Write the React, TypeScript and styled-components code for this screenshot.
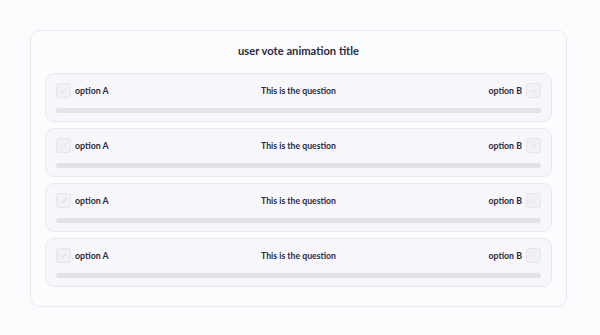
import React from "react";
import styled, { createGlobalStyle } from "styled-components";

const Global = createGlobalStyle`
  html, body { margin: 0; padding: 0; background: #fbfafd; }
  body { font-family: "Lato", "Noto Sans", sans-serif; color: #25263a; }
`;

const Page = styled.div`
  width: 600px;
  height: 335px;
  box-sizing: border-box;
  padding: 30px 33px 28px 30px;
`;

const Card = styled.div`
  box-sizing: border-box;
  height: 277px;
  border: 1px solid #e9e8ef;
  border-radius: 10px;
  background: #fcfbfe;
  padding: 10px 14px 19px 14px;
  display: flex;
  flex-direction: column;
`;

const Title = styled.h1`
  margin: 0;
  height: 32px;
  font-size: 11.2px;
  font-weight: 700;
  text-align: center;
  line-height: 20px;
  color: #2a2b40;
`;

const List = styled.div`
  display: flex;
  flex-direction: column;
  gap: 6px;
`;

const Row = styled.div`
  box-sizing: border-box;
  height: 49px;
  border: 1px solid #e9e8ef;
  border-radius: 9px;
  background: #f7f6fa;
  padding: 8px 10px 0 10px;
  display: flex;
  flex-direction: column;
`;

const Top = styled.div`
  display: grid;
  grid-template-columns: 1fr auto 1fr;
  align-items: center;
  height: 16px;
`;

const Side = styled.div<{ $right?: boolean }>`
  display: flex;
  align-items: center;
  gap: 4px;
  justify-content: ${(p) => (p.$right ? "flex-end" : "flex-start")};
`;

const Box = styled.div`
  box-sizing: border-box;
  width: 15px;
  height: 15px;
  border: 1px solid #e6e5ec;
  border-radius: 3px;
  background: #f1f0f5;
  display: flex;
  align-items: center;
  justify-content: center;
`;

const Label = styled.span`
  font-size: 8.8px;
  font-weight: 700;
  color: #2a2b40;
`;

const Question = styled.span`
  font-size: 8.7px;
  font-weight: 700;
  color: #2a2b40;
`;

const Bar = styled.div`
  margin-top: 10px;
  height: 5px;
  border-radius: 3px;
  background: #e2e2ea;
`;

const Check = () => (
  <svg width="9" height="9" viewBox="0 0 10 10">
    <path d="M2.5 5.2 L4.3 7 L7.8 3.2" fill="none" stroke="#dcdbe3" strokeWidth="1" strokeLinecap="round" strokeLinejoin="round" />
  </svg>
);

export default function App() {
  return (
    <>
      <Global />
      <Page>
        <Card>
          <Title>user vote animation title</Title>
          <List>
            {[0, 1, 2, 3].map((i) => (
              <Row key={i}>
                <Top>
                  <Side>
                    <Box><Check /></Box>
                    <Label>option A</Label>
                  </Side>
                  <Question>This is the question</Question>
                  <Side $right>
                    <Label>option B</Label>
                    <Box><Check /></Box>
                  </Side>
                </Top>
                <Bar />
              </Row>
            ))}
          </List>
        </Card>
      </Page>
    </>
  );
}
